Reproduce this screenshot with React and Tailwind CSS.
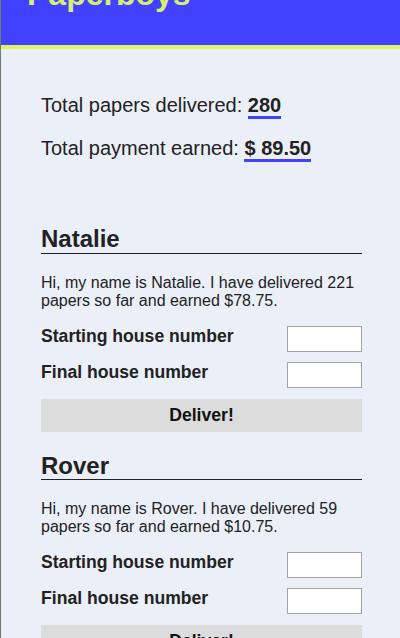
import React from "react";

const boys = [
  { name: "Natalie", papers: 221, earned: "78.75" },
  { name: "Rover", papers: 59, earned: "10.75" },
];

function Paperboy({ boy }) {
  return (
    <section className="mt-[20px] first:mt-[65px]">
      <h2 className="text-[24px] font-bold leading-[1.15] border-b border-[#222]">{boy.name}</h2>
      <p className="mt-[20px] text-[16px] leading-[18px]">
        Hi, my name is {boy.name}. I have delivered {boy.papers} papers so far and earned ${boy.earned}.
      </p>
      <div className="mt-[16px] flex flex-col gap-[10px]">
        <label className="flex items-start justify-between">
          <span className="text-[17.6px] font-bold leading-[1.15]">Starting house number</span>
          <input type="text" className="w-[75px] h-[26px] bg-white border border-[#a4a4a4]" />
        </label>
        <label className="flex items-start justify-between">
          <span className="text-[17.6px] font-bold leading-[1.15]">Final house number</span>
          <input type="text" className="w-[75px] h-[26px] bg-white border border-[#a4a4a4]" />
        </label>
      </div>
      <button className="mt-[11px] w-full bg-[#dcdcdc] py-[6px] text-[17.6px] font-bold leading-[21px] text-[#111]">
        Deliver!
      </button>
    </section>
  );
}

export default function App() {
  return (
    <div
      className="min-h-[638px] bg-[#ebeff8] border-l border-[#6b806b] text-[#222]"
      style={{ fontFamily: '"Liberation Sans", Arial, sans-serif' }}
    >
      <header className="h-[49px] bg-[#4141ff] border-b-4 border-[#e0f45f] overflow-hidden pl-[26px]">
        <h1 className="-mt-[24px] text-[32px] font-bold leading-[37px] text-[#d4f06c]">Paperboys</h1>
      </header>

      <main className="pl-[40px] pr-[38px] pt-[45px] pb-[40px]">
        <div className="flex flex-col gap-[20px] text-[20px] leading-[23px]">
          <p>
            Total papers delivered: <span className="font-bold border-b-[3px] border-[#4141ff]">280</span>
          </p>
          <p>
            Total payment earned: <span className="font-bold border-b-[3px] border-[#4141ff]">$ 89.50</span>
          </p>
        </div>
        <div>
          {boys.map((b) => (
            <Paperboy key={b.name} boy={b} />
          ))}
        </div>
      </main>
    </div>
  );
}
